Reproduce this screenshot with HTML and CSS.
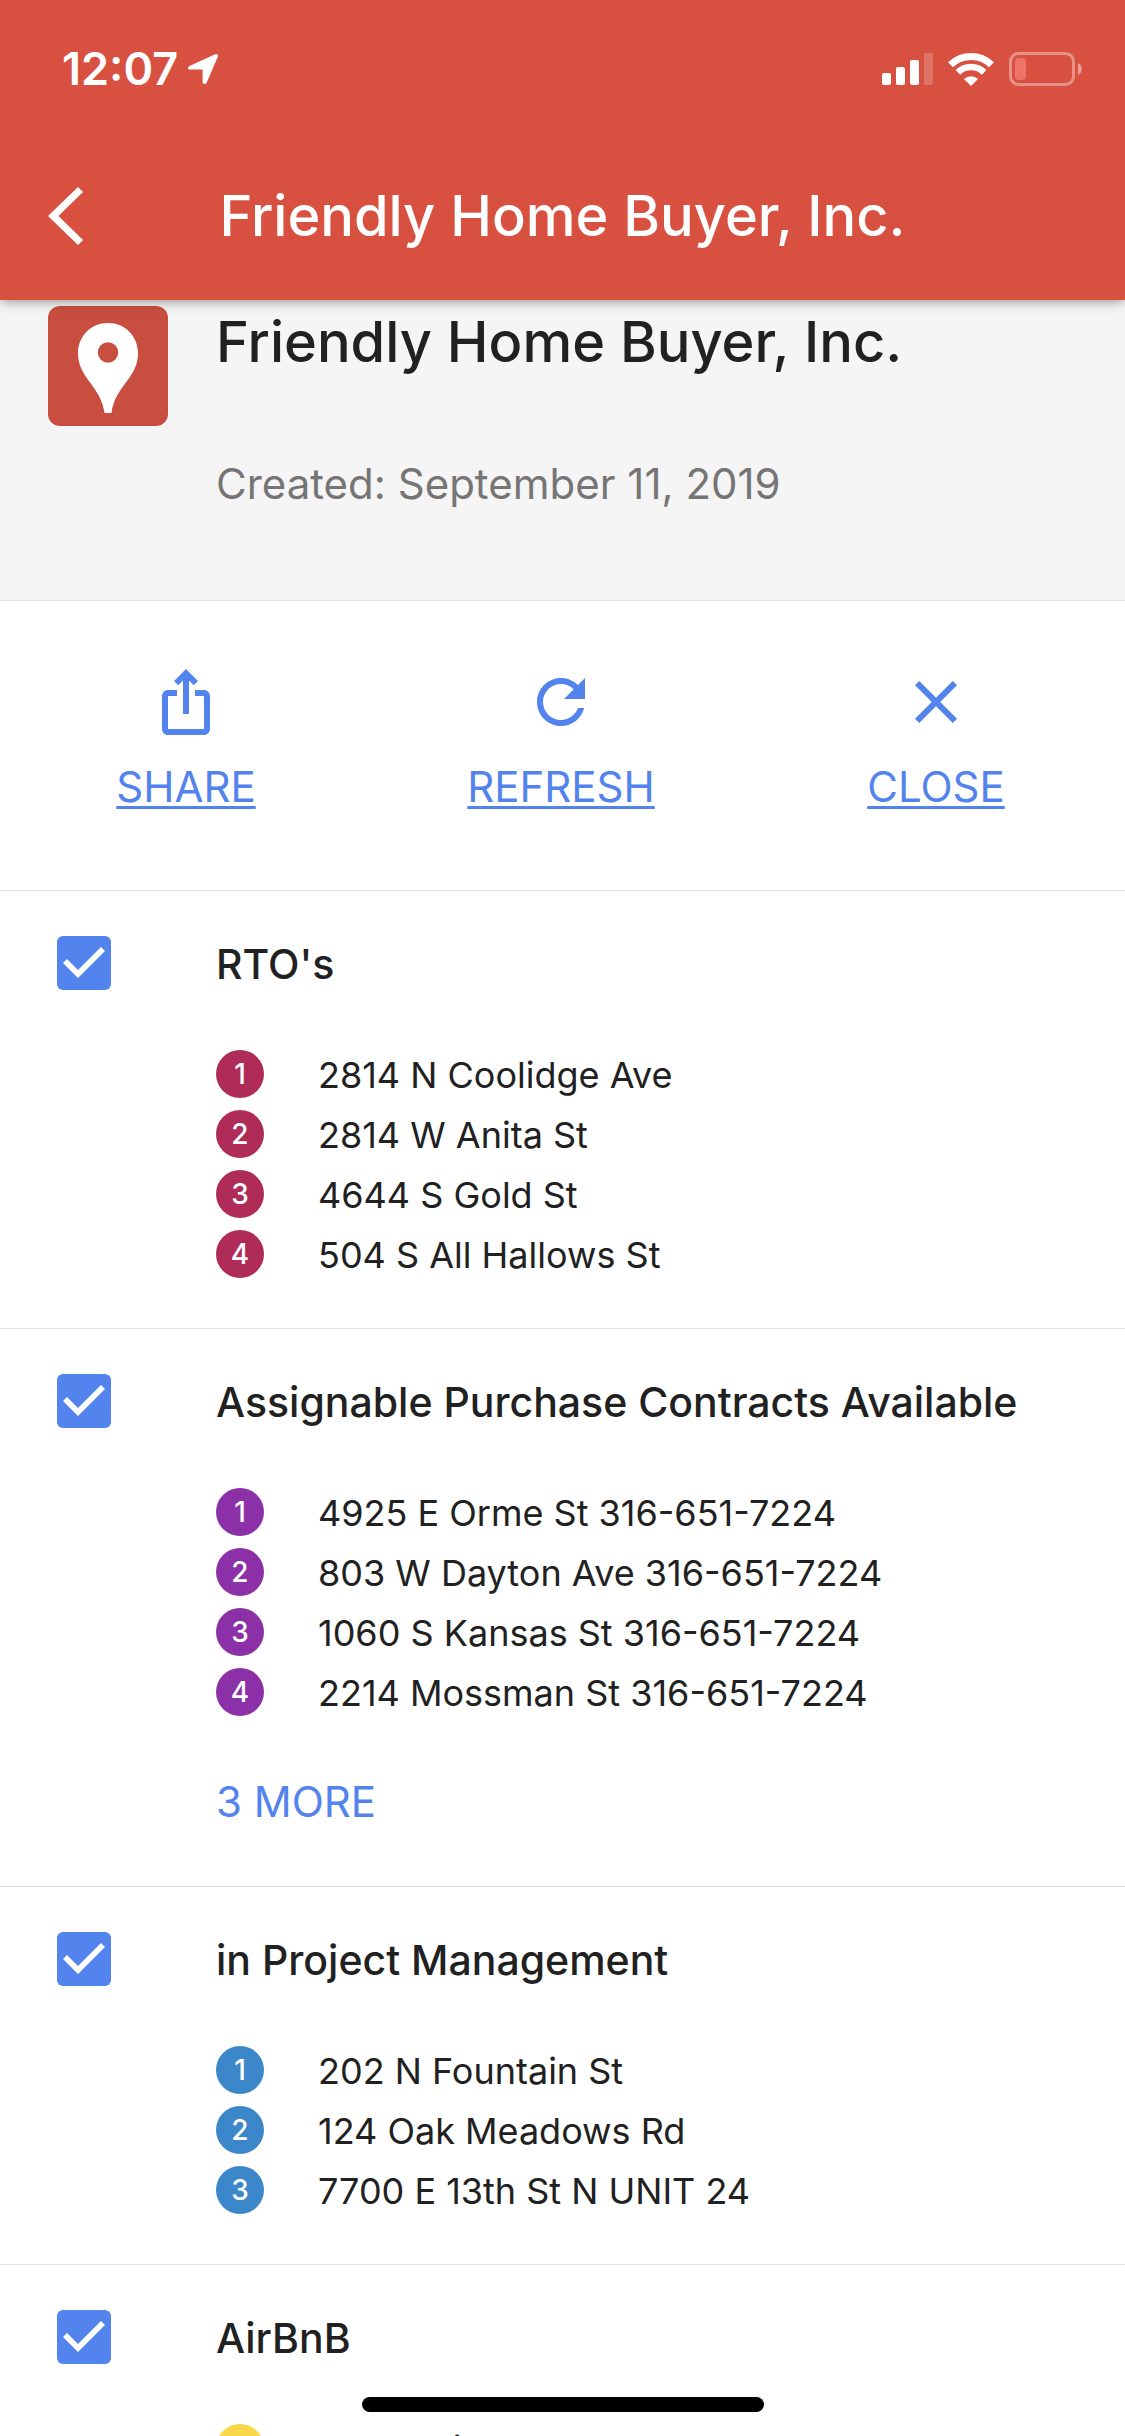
FILE: index.html
```html
<!DOCTYPE html>
<html lang="en">
<head>
<meta charset="utf-8">
<meta name="viewport" content="width=device-width, initial-scale=1">
<title>Friendly Home Buyer, Inc.</title>
<link rel="stylesheet" href="styles.css">
</head>
<body>
<header class="top">
  <div class="status">
    <div class="status-group">
      <span class="clock">12:07</span>
      <svg width="30" height="30" viewBox="0 0 30 30" aria-hidden="true"><path d="M27.200.3 1.500 12C-.8 13-.4 15.600 2 15.600H14.600V28C14.600 30.400 17.800 30.700 18.700 28.500L29.700 3C30.500 1 29-.4 27.200.3Z" fill="#fff"/></svg>
    </div>
    <div class="status-group status-right">
      <svg width="51" height="32" viewBox="0 0 51 32" fill="#fff" aria-hidden="true"><rect y="20" width="9" height="12" rx="2"/><rect x="14" y="14" width="9" height="18" rx="2"/><rect x="28" y="7" width="9" height="25" rx="2"/><rect x="42" width="9" height="32" rx="2" opacity=".2"/></svg>
      <svg width="46" height="33" viewBox="0 0 46 33" fill="none" stroke="#fff" aria-hidden="true"><path d="M2.500 11.800A29.500 29.500 0 0 1 43.500 11.800" stroke-width="7"/><path d="M9.800 19.300A19 19 0 0 1 36.200 19.300" stroke-width="6.500"/><path d="M16 26A10 10 0 0 1 30 26L23 33Z" fill="#fff" stroke="none"/></svg>
      <svg width="73" height="34" viewBox="0 0 73 34" aria-hidden="true"><rect x="1.500" y="1.500" width="63" height="31" rx="8" fill="none" stroke="#fff" stroke-opacity=".38" stroke-width="3"/><rect x="6" y="6" width="11" height="22" rx="4" fill="#ee7368"/><path d="M69 11C74 13 74 21 69 23Z" fill="#fff" opacity=".45"/></svg>
    </div>
  </div>
  <div class="appbar">
    <button class="back" type="button" aria-label="Back"><svg width="35" height="60" viewBox="0 0 35 60" aria-hidden="true"><path d="M30 1 0 30 30 59 35 54 10.500 30 35 6Z" fill="#fff"/></svg></button>
    <div class="appbar-title">Friendly Home Buyer, Inc.</div>
  </div>
</header>

<main class="content">
  <section class="meta">
    <svg width="120" height="120" viewBox="0 0 120 120" aria-hidden="true"><rect width="120" height="120" rx="12" fill="#c84e3f"/><path fill="#fff" d="M60 17C43 17 30 30 30 47.500C30 72 53 80 56.500 107H63.500C67 80 90 72 90 47.500C90 30 77 17 60 17Z"/><circle cx="60" cy="46.500" r="10.200" fill="#c84e3f"/></svg>
    <div class="meta-text">
      <h1>Friendly Home Buyer, Inc.</h1>
      <p>Created: September 11, 2019</p>
    </div>
  </section>

  <nav class="actions">
    <a class="action" href="#share"><svg width="72" height="72" viewBox="0 0 24 24" fill="currentColor" aria-hidden="true"><path d="M16 5l-1.420 1.420-1.590-1.590V16h-1.980V4.830L9.420 6.420 8 5l4-4 4 4zm4 5v11c0 1.100-.9 2-2 2H6c-1.110 0-2-.9-2-2V10c0-1.110.89-2 2-2h3v2H6v11h12V10h-3V8h3c1.100 0 2 .89 2 2z"/></svg><span>SHARE</span></a>
    <a class="action" href="#refresh"><svg width="72" height="72" viewBox="0 0 24 24" fill="currentColor" aria-hidden="true"><path d="M17.650 6.350C16.200 4.900 14.210 4 12 4c-4.420 0-7.990 3.580-7.990 8s3.570 8 7.990 8c3.730 0 6.840-2.550 7.730-6h-2.080c-.82 2.330-3.040 4-5.650 4-3.310 0-6-2.690-6-6s2.690-6 6-6c1.660 0 3.140.69 4.220 1.780L13 11h7V4l-2.350 2.350z"/></svg><span>REFRESH</span></a>
    <a class="action" href="#close"><svg width="72" height="72" viewBox="0 0 24 24" fill="currentColor" aria-hidden="true"><path d="M19 6.410L17.590 5 12 10.590 6.410 5 5 6.410 10.590 12 5 17.590 6.410 19 12 13.410 17.590 19 19 17.590 13.410 12z"/></svg><span>CLOSE</span></a>
  </nav>

  <section class="layer">
    <div class="layer-head"><input type="checkbox" id="layer-rto" checked><label for="layer-rto">RTO's</label></div>
    <ol class="places magenta">
      <li><span class="pin">1</span>2814 N Coolidge Ave</li>
      <li><span class="pin">2</span>2814 W Anita St</li>
      <li><span class="pin">3</span>4644 S Gold St</li>
      <li><span class="pin">4</span>504 S All Hallows St</li>
    </ol>
  </section>

  <section class="layer">
    <div class="layer-head"><input type="checkbox" id="layer-contracts" checked><label for="layer-contracts">Assignable Purchase Contracts Available</label></div>
    <ol class="places purple">
      <li><span class="pin">1</span>4925 E Orme St 316-651-7224</li>
      <li><span class="pin">2</span>803 W Dayton Ave 316-651-7224</li>
      <li><span class="pin">3</span>1060 S Kansas St 316-651-7224</li>
      <li><span class="pin">4</span>2214 Mossman St 316-651-7224</li>
    </ol>
    <button class="more" type="button">3 MORE</button>
  </section>

  <section class="layer">
    <div class="layer-head"><input type="checkbox" id="layer-project" checked><label for="layer-project">in Project Management</label></div>
    <ol class="places blue">
      <li><span class="pin">1</span>202 N Fountain St</li>
      <li><span class="pin">2</span>124 Oak Meadows Rd</li>
      <li><span class="pin">3</span>7700 E 13th St N UNIT 24</li>
    </ol>
  </section>

  <section class="layer">
    <div class="layer-head"><input type="checkbox" id="layer-airbnb" checked><label for="layer-airbnb">AirBnB</label></div>
    <ol class="places yellow">
      <li><span class="pin">1</span>2038 Wiel</li>
    </ol>
  </section>
</main>
<div class="home-indicator"></div>
</body>
</html>
```
FILE: styles.css
```css
* {
  box-sizing: border-box;
}

body {
  margin: 0;
  height: 100vh;
  display: flex;
  flex-direction: column;
  overflow: hidden;
  background: #fff;
  color: #212121;
  font-family: Inter, "Liberation Sans", sans-serif;
}

h1,
p,
ol {
  margin: 0;
  padding: 0;
}

svg {
  display: block;
  flex: none;
}

button {
  border: 0;
  padding: 0;
  background: none;
  font: inherit;
}

/* Status bar and title bar */
.top {
  position: relative;
  z-index: 1;
  flex: none;
  background: #d8503f;
  color: #fff;
  box-shadow: 0 0 12px rgba(0, 0, 0, 0.5);
}

.status {
  display: flex;
  justify-content: space-between;
  align-items: center;
  height: 132px;
  padding: 6px 43px 0 62px;
}

.status-group {
  display: flex;
  align-items: center;
  gap: 10px;
}

.status-right {
  gap: 15px;
}

.clock {
  font-size: 45px;
  font-weight: 600;
  line-height: 60px;
}

.appbar {
  display: grid;
  grid-template-columns: 1fr auto 1fr;
  align-items: center;
  height: 168px;
  padding: 0 48px;
}

.back {
  justify-self: start;
}

.appbar-title,
h1 {
  font-size: 56px;
  font-weight: 500;
  line-height: 72px;
}

/* Map summary */
.meta {
  display: flex;
  gap: 48px;
  padding: 6px 48px 86px;
  background: #f5f5f5;
  border-bottom: 1px solid #e0e0e0;
}

.meta p {
  margin-top: 76px;
  font-size: 42px;
  line-height: 60px;
  color: #757575;
}

/* Share, refresh, close */
.actions {
  display: grid;
  grid-template-columns: repeat(3, 1fr);
  padding: 65px 0 73px;
  border-bottom: 1px solid #e0e0e0;
}

.action {
  display: flex;
  flex-direction: column;
  align-items: center;
  gap: 19px;
  padding-right: 3px;
  color: #5383ec;
  font-size: 42px;
  line-height: 60px;
  text-underline-offset: 4px;
  text-decoration-thickness: 3px;
  text-decoration-skip-ink: none;
}

/* Layers */
.layer {
  padding: 45px 48px 50px 57px;
  border-bottom: 1px solid #e0e0e0;
}

.layer-head {
  display: flex;
  align-items: center;
  gap: 105px;
  height: 54px;
  font-size: 41px;
  font-weight: 500;
}

.layer-head label {
  padding-top: 2px;
}

.layer-head input {
  appearance: none;
  flex: none;
  width: 54px;
  height: 54px;
  margin: 0;
  border-radius: 6px;
  background: #5383ec;
}

.layer-head input:checked::before {
  content: "";
  display: block;
  width: 54px;
  height: 54px;
  background: #fff;
  clip-path: polygon(21px 42px, 6px 27px, 10px 23px, 21px 34px, 44px 11px, 48px 15px);
}

.places {
  display: flex;
  flex-direction: column;
  gap: 12px;
  margin-top: 60px;
  padding-left: 159px;
  list-style: none;
  font-size: 36px;
  line-height: 50px;
}

.places li {
  display: flex;
  align-items: flex-start;
  gap: 54px;
  height: 48px;
}

.pin {
  flex: none;
  width: 48px;
  height: 48px;
  border-radius: 50%;
  color: #fff;
  font-size: 28px;
  font-weight: 500;
  line-height: 48px;
  text-align: center;
}

.magenta .pin {
  background: #af2b58;
}

.purple .pin {
  background: #8c30a8;
}

.blue .pin {
  background: #3c87c9;
}

.yellow .pin {
  background: #f8d748;
}

.more {
  display: block;
  height: 70px;
  margin: 50px 0 0 159px;
  color: #5383ec;
  font-size: 42px;
}

.home-indicator {
  position: fixed;
  z-index: 2;
  bottom: 24px;
  left: 50%;
  width: 402px;
  height: 15px;
  margin-left: -201px;
  border-radius: 8px;
  background: #000;
}
```
